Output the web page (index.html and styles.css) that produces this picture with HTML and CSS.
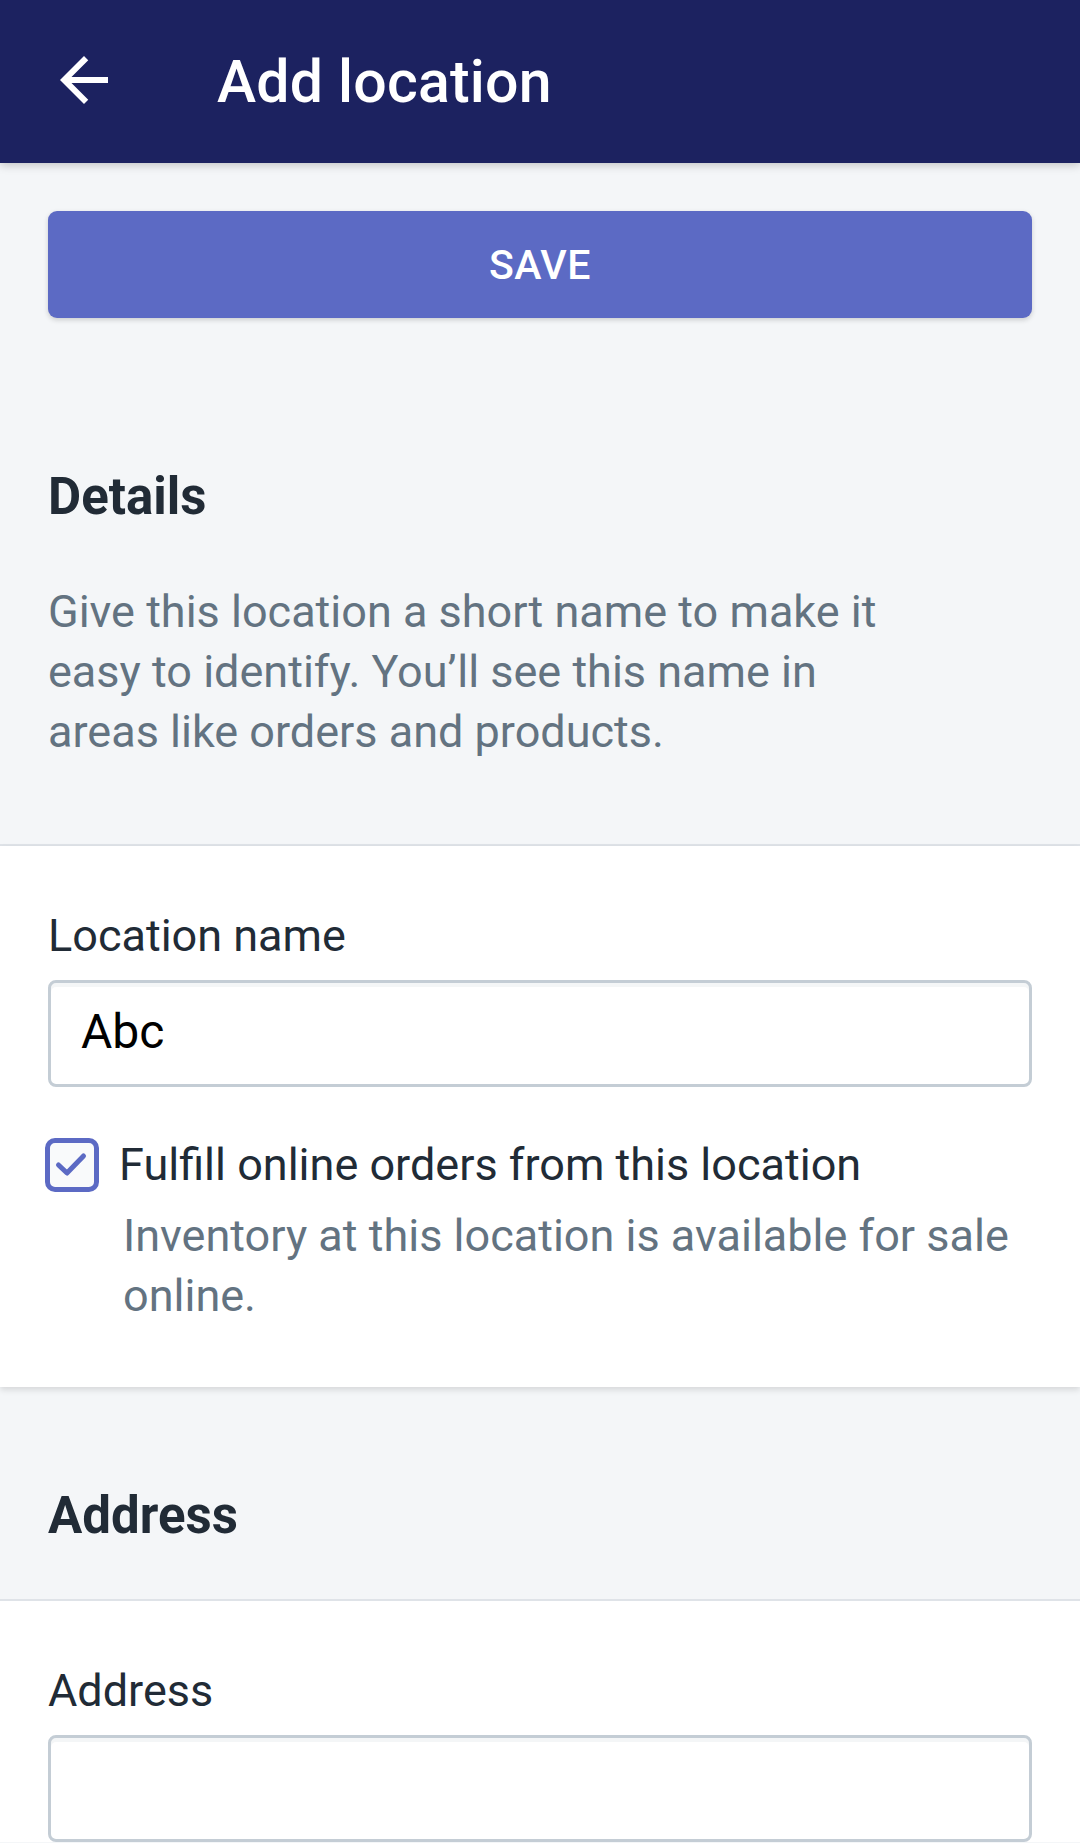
FILE: index.html
```html
<!DOCTYPE html>
<html lang="en">
<head>
<meta charset="utf-8">
<title>Add location</title>
<link rel="stylesheet" href="styles.css">
</head>
<body>
<header class="topbar">
  <span class="back" aria-label="Back">
    <svg viewBox="0 0 24 24" width="72" height="72"><path d="M20 11H7.83l5.59-5.59L12 4l-8 8 8 8 1.41-1.41L7.83 13H20v-2z" fill="#ffffff"/></svg>
  </span>
  <h1 class="title">Add location</h1>
</header>
<main class="page">
  <section class="gray first">
    <button class="save">SAVE</button>
    <h2 class="heading details-h">Details</h2>
    <p class="desc">Give this location a short name to make it easy to identify. You’ll see this name in areas like orders and products.</p>
  </section>
  <section class="card">
    <label class="label">Location name</label>
    <div class="field">Abc</div>
    <div class="check-row">
      <span class="checkbox">
        <svg viewBox="0 0 54 54" width="54" height="54"><polyline points="13.5,27 22,35 38.5,18" fill="none" stroke="#5c6ac4" stroke-width="5" stroke-linecap="round" stroke-linejoin="round"/></svg>
      </span>
      <span class="check-label">Fulfill online orders from this location</span>
    </div>
    <p class="help">Inventory at this location is available for sale online.</p>
  </section>
  <section class="gray second">
    <h2 class="heading">Address</h2>
  </section>
  <section class="card last">
    <label class="label">Address</label>
    <div class="field"></div>
  </section>
</main>
</body>
</html>
```
FILE: styles.css
```css
* { box-sizing: border-box; }
html, body {
  margin: 0;
  padding: 0;
  background: #f4f6f8;
  font-family: Roboto, "Noto Sans", "Liberation Sans", sans-serif;
}
body { width: 1080px; height: 1843px; overflow: hidden; }

.topbar {
  position: relative;
  z-index: 2;
  height: 163px;
  background: #1c2260;
  display: flex;
  align-items: center;
  padding-left: 48px;
  box-shadow: 0 2px 9px rgba(0, 0, 0, 0.22);
}
.back { display: flex; width: 72px; height: 72px; margin-top: -4px; }
.title {
  margin: 0 0 0 97px;
  color: #ffffff;
  font-size: 59px;
  font-weight: 500;
  line-height: 72px;
  letter-spacing: 0.2px;
}

.page { display: flex; flex-direction: column; }

.gray { background: #f4f6f8; padding: 0 48px; }
.gray.first { padding-top: 48px; padding-bottom: 82px; border-bottom: 2px solid #dfe3e8; }
.gray.second { padding-top: 99px; padding-bottom: 53px; border-bottom: 2px solid #dfe3e8; }

.save {
  display: block;
  width: 984px;
  height: 107px;
  border: none;
  border-radius: 9px;
  background: #5c6ac4;
  color: #ffffff;
  font-family: Roboto, "Noto Sans", sans-serif;
  font-size: 41px;
  font-weight: 500;
  letter-spacing: 0.5px;
  box-shadow: 0 2px 5px rgba(23, 24, 24, 0.18);
  padding: 0;
}

.heading {
  margin: 0;
  font-size: 51px;
  line-height: 60px;
  font-weight: 700;
  color: #212b36;
}
.details-h { margin-top: 149px; }

.desc {
  margin: 55px 0 0;
  max-width: 860px;
  font-size: 45px;
  line-height: 60px;
  color: #637381;
}

.card {
  position: relative;
  z-index: 1;
  background: #ffffff;
  padding: 62px 48px 61px;
}
.card:not(.last) { box-shadow: 0 3px 6px rgba(0, 0, 0, 0.12); }
.card.last { padding-bottom: 0; }

.label {
  display: block;
  font-size: 45px;
  line-height: 56px;
  color: #212b36;
}

.field {
  margin-top: 16px;
  height: 107px;
  border: 3px solid #c4cdd5;
  border-radius: 8px;
  box-shadow: inset 0 4px 0 rgba(196, 205, 213, 0.18);
  background: #ffffff;
  display: flex;
  align-items: center;
  padding: 0 30px 4px;
  font-size: 48px;
  line-height: 56px;
  color: #000000;
}

.check-row {
  margin-top: 49px;
  display: flex;
  align-items: flex-start;
}
.checkbox {
  display: flex;
  width: 54px;
  height: 54px;
  margin: 2px 20px 0 -3px;
  border: 5px solid #5c6ac4;
  border-radius: 10px;
  background: #f9fafb;
  align-items: center;
  justify-content: center;
}
.checkbox svg { flex: none; }
.check-label {
  font-size: 45px;
  line-height: 57px;
  color: #212b36;
}

.help {
  margin: 13px 0 0 75px;
  font-size: 45px;
  line-height: 60px;
  color: #637381;
}
```
